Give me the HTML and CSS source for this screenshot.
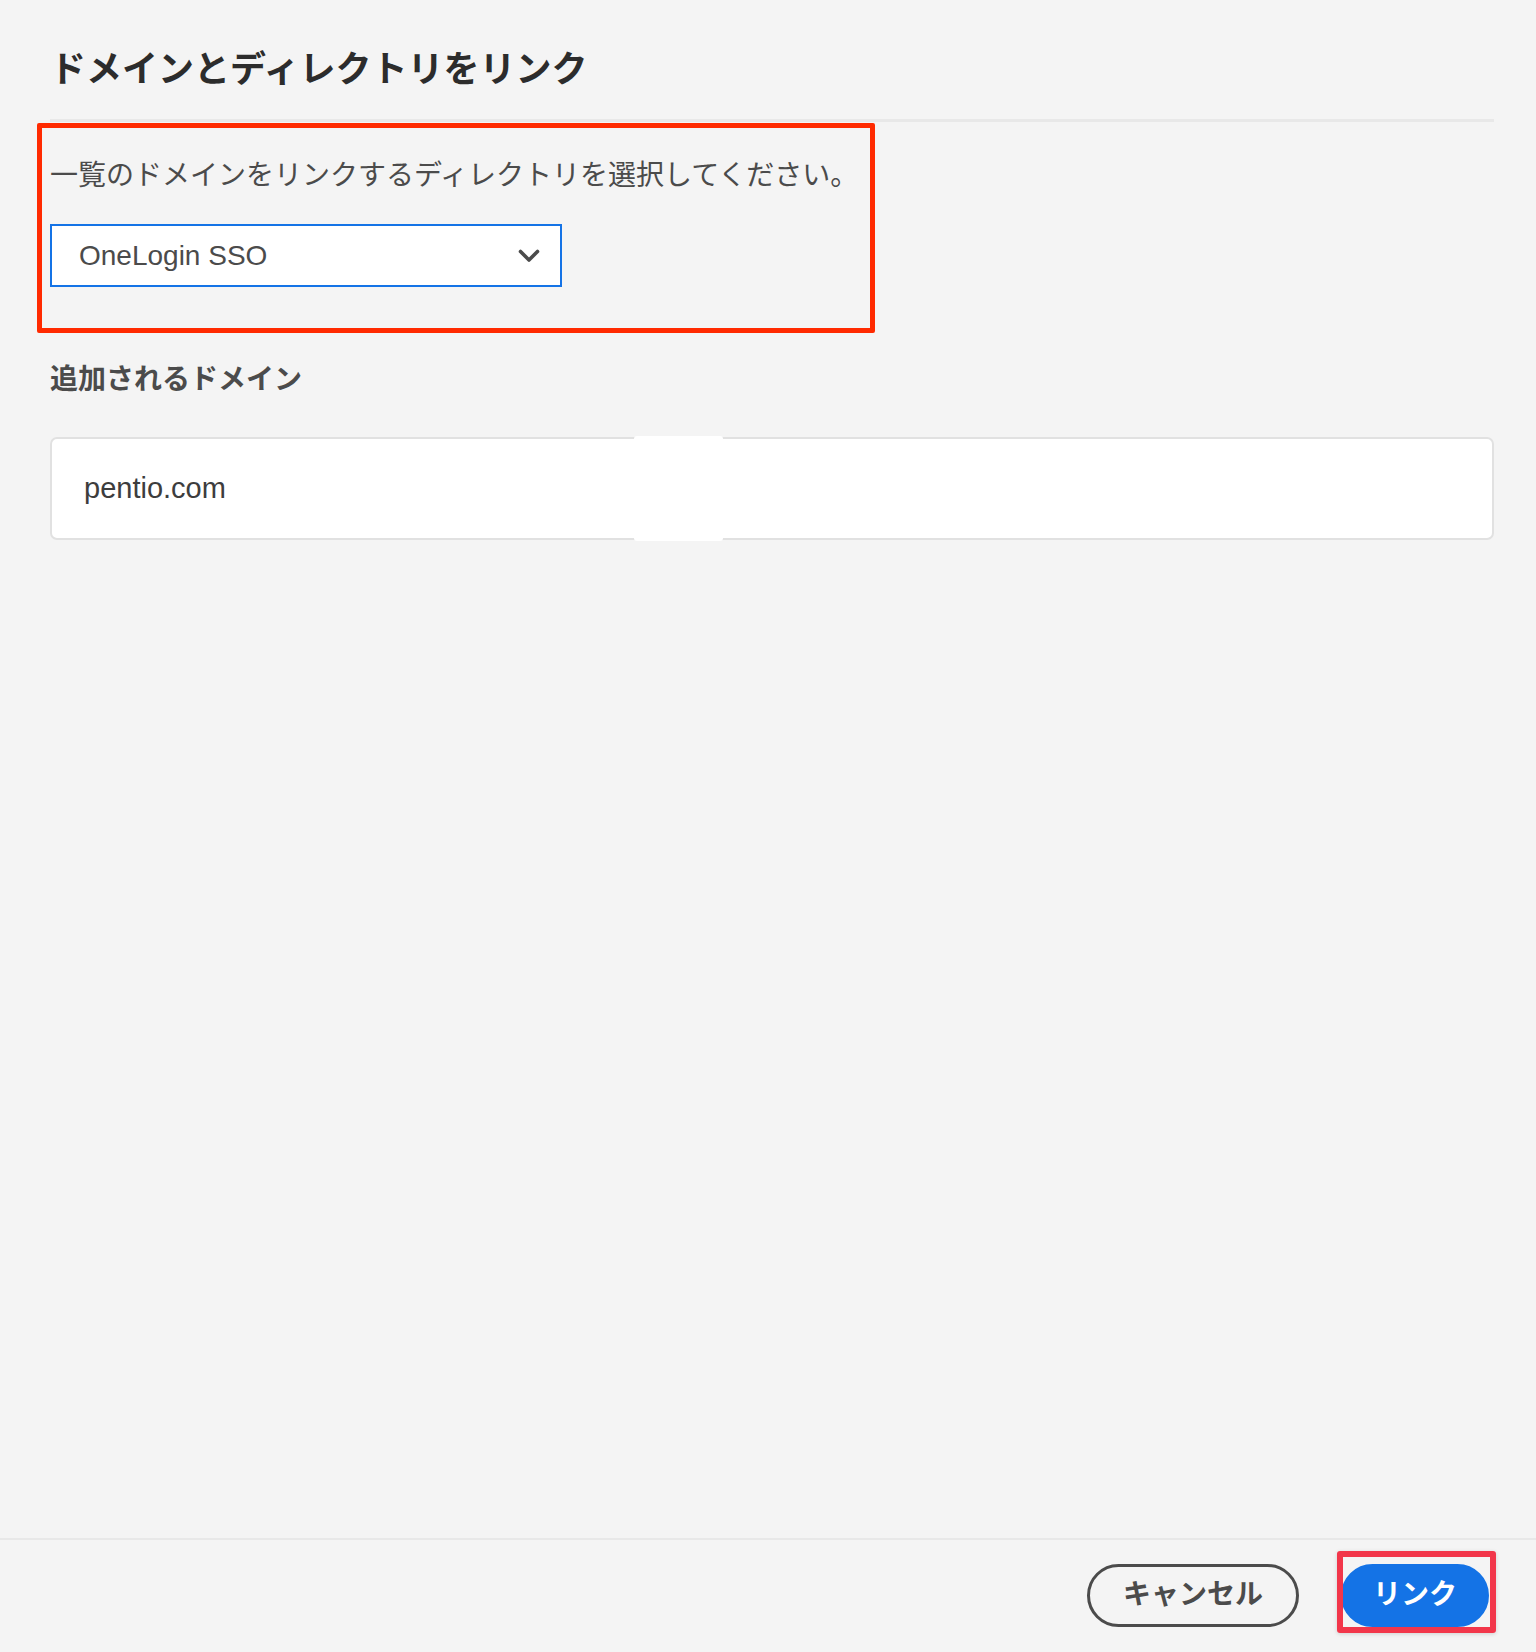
FILE: index.html
```html
<!DOCTYPE html>
<html lang="ja">
<head>
  <meta charset="UTF-8" />
  <meta name="viewport" content="width=device-width, initial-scale=1" />
  <title>ドメインとディレクトリをリンク</title>
  <link rel="stylesheet" href="styles.css">
</head>
<body>

  <div class="dialog">
    <header class="dialog-head">
      <h1>ドメインとディレクトリをリンク</h1>
    </header>

    <main class="dialog-body">
      <section class="highlight">
        <p class="hint">一覧のドメインをリンクするディレクトリを選択してください。</p>
        <div class="picker">
          <span>OneLogin SSO</span>
          <svg class="chevron" width="22" height="14" viewBox="0 0 22 14" aria-hidden="true">
            <path d="M2.5 2.5 L11 11 L19.5 2.5" fill="none" stroke="#4b4b4b" stroke-width="3.6" stroke-linecap="round" stroke-linejoin="round"/>
          </svg>
        </div>
      </section>

      <h2 class="label">追加されるドメイン</h2>

      <div class="domains">
        <div class="domain">pentio.com</div>
        <span class="redact"></span>
      </div>
    </main>

    <footer class="dialog-foot">
      <button type="button" class="btn btn-cancel">キャンセル</button>
      <button type="button" class="btn btn-primary">リンク</button>
      <span class="mark"></span>
    </footer>
  </div>

</body>
</html>
```

FILE: styles.css
```css
* {
  box-sizing: border-box;
}

html, body {
  margin: 0;
  padding: 0;
  background: #f4f4f4;
  color: #4b4b4b;
  font-family: "Liberation Sans", "Noto Sans CJK JP", sans-serif;
}

.dialog {
  display: flex;
  flex-direction: column;
  min-height: 100vh;
}

/* cabeçalho */
.dialog-head {
  margin: 0 42px 0 50px;
  padding: 46px 0 25px;
  border-bottom: 3px solid #e8e8e8;
}

.dialog-head h1 {
  margin: 0;
  font-size: 36px;
  line-height: 48px;
  font-weight: 700;
  color: #2c2c2c;
}

.dialog-body {
  flex: 1;
  margin: 0 42px 0 50px;
}

/* caixa de destaque vermelha */
.highlight {
  width: 838px;
  margin: 1px 0 0 -13px;
  padding: 28px 8px 41px;
  border: 5px solid #ff2a00;
  border-radius: 2px;
}

.hint {
  margin: 0 0 28px;
  font-size: 28px;
  line-height: 40px;
  white-space: nowrap;
}

.picker {
  display: flex;
  align-items: center;
  justify-content: space-between;
  width: 512px;
  height: 63px;
  padding: 0 20px 0 27px;
  background: #fff;
  border: 2px solid #1473e6;
  font-size: 28px;
  color: #4b4b4b;
}

.label {
  margin: 27px 0 37px;
  font-size: 28px;
  line-height: 40px;
  font-weight: 700;
}

.domains {
  position: relative;
}

.domain {
  display: flex;
  align-items: center;
  height: 103px;
  padding-left: 32px;
  background: #fff;
  border: 2px solid #e1e1e1;
  border-radius: 7px;
  font-size: 29px;
  color: #3d3d3d;
}

.redact {
  position: absolute;
  left: 584px;
  top: -1px;
  width: 89px;
  height: 105px;
  background: #fff;
  border-radius: 3px;
}

/* rodapé */
.dialog-foot {
  position: relative;
  display: flex;
  justify-content: flex-end;
  gap: 42px;
  padding: 24px 47px 25px 0;
  border-top: 2px solid #e8e8e8;
}

.btn {
  height: 63px;
  padding-bottom: 3px;
  border-radius: 32px;
  font-family: inherit;
  font-size: 28px;
  line-height: 1;
  font-weight: 700;
  cursor: pointer;
}

.btn-cancel {
  padding-left: 33px;
  padding-right: 33px;
  background: transparent;
  border: 3px solid #4b4b4b;
  color: #4b4b4b;
}

.btn-primary {
  padding-left: 29px;
  padding-right: 29px;
  background: #1473e6;
  border: 3px solid #1473e6;
  color: #fff;
}

.mark {
  position: absolute;
  right: 40px;
  top: 11px;
  width: 159px;
  height: 82px;
  border: 6px solid #f2364a;
  border-radius: 3px;
  box-shadow: 0 1px 4px rgba(0,0,0,0.15);
}
```
